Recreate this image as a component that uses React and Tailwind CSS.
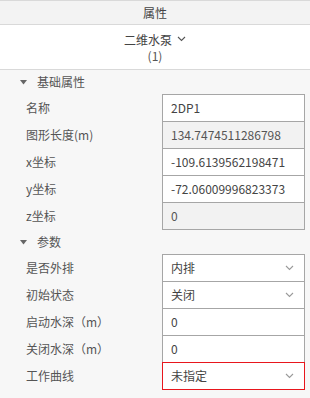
import React from "react";

const Chevron = ({ className = "" }) => (
  <svg width="9" height="6" viewBox="0 0 9 6" className={className} fill="none">
    <path d="M1 1l3.5 3.5L8 1" stroke="currentColor" strokeWidth="1.1" />
  </svg>
);

const Tri = () => (
  <svg width="7" height="5" viewBox="0 0 7 5" className="text-[#666]">
    <path d="M0 0h7L3.5 4.5z" fill="currentColor" />
  </svg>
);

function Row({ label, value, disabled, select, error, first }) {
  return (
    <div className={`flex h-[28px] ${first ? "" : "-mt-px"}`}>
      <div className="w-[162px] pl-[26px] flex items-center text-[12px] text-[#555]">{label}</div>
      <div
        className={`w-[143px] h-[28px] border flex items-center pl-[8px] pr-[10px] text-[12px] ${
          error ? "border-[#e8161d] relative z-10" : "border-[#a6a6a6]"
        } ${disabled ? "bg-[#f2f2f2] text-[#555]" : "bg-white text-[#444]"}`}
      >
        <span className="flex-1 whitespace-nowrap">{value}</span>
        {select && <Chevron className="text-[#9a9a9a]" />}
      </div>
    </div>
  );
}

function Section({ title }) {
  return (
    <div className="h-[24px] flex items-center pl-[20px] gap-[10px] text-[12px] text-[#555]">
      <Tri />
      <span>{title}</span>
    </div>
  );
}

export default function App() {
  return (
    <div
      className="w-[310px] h-[398px] bg-[#f7f7f7] border-t border-[#d9d9d9] overflow-hidden"
      style={{ fontFamily: '"Noto Sans CJK SC", "Noto Sans", sans-serif' }}
    >
      <div className="h-[24px] bg-[#f3f3f3] border-b border-[#d9d9d9] flex items-center justify-center text-[12px] text-[#444]">
        属性
      </div>
      <div className="h-[45px] bg-white border-b border-[#d9d9d9] flex flex-col items-center justify-center text-[12px] text-[#444]">
        <div className="h-[15px] leading-[15px] flex items-center gap-[5px]">
          <span>二维水泵</span>
          <Chevron className="text-[#555]" />
        </div>
        <div className="h-[15px] leading-[15px] mt-[1px] text-[#555]">(1)</div>
      </div>
      <Section title="基础属性" />
      <Row first label="名称" value="2DP1" />
      <Row label="图形长度(m)" value="134.7474511286798" disabled />
      <Row label="x坐标" value="-109.6139562198471" />
      <Row label="y坐标" value="-72.06009996823373" />
      <Row label="z坐标" value="0" disabled />
      <Section title="参数" />
      <Row first label="是否外排" value="内排" select />
      <Row label="初始状态" value="关闭" select />
      <Row label="启动水深（m）" value="0" />
      <Row label="关闭水深（m）" value="0" />
      <Row label="工作曲线" value="未指定" select error />
    </div>
  );
}
